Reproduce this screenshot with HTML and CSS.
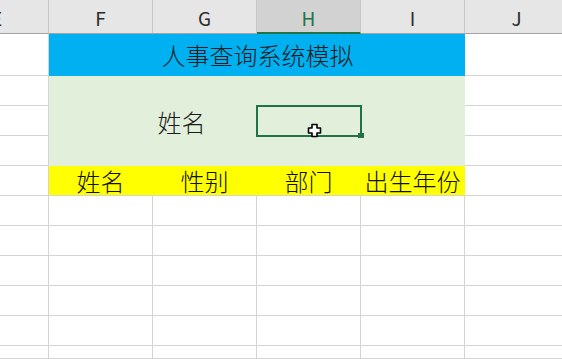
FILE: index.html
```html
<!DOCTYPE html>
<html lang="zh-CN">
<head>
    <meta charset="UTF-8">
    <title>人事查询系统模拟</title>
    <link rel="stylesheet" href="styles.css">
</head>
<body>
    <div class="sheet">
        <!-- column headers -->
        <div class="col-head">E</div>
        <div class="col-head">F</div>
        <div class="col-head">G</div>
        <div class="col-head active">H</div>
        <div class="col-head">I</div>
        <div class="col-head">J</div>

        <!-- row 1 -->
        <div class="cell"></div>
        <div class="cell title">人事查询系统模拟</div>
        <div class="cell"></div>

        <!-- rows 2-4 -->
        <div class="cell"></div>
        <div class="cell query">
            <div class="query-label">姓名</div>
            <div class="sel">
                <span class="handle"></span>
                <svg class="cursor" width="15" height="15" viewBox="0 0 15 15">
                    <path d="M5 1.5h5v3.5h3.5v5h-3.5v3.5h-5v-3.5h-3.5v-5h3.5z" fill="#fff" stroke="#000" stroke-width="1.6" stroke-linejoin="round"/>
                </svg>
            </div>
        </div>
        <div class="cell"></div>
        <div class="cell"></div>
        <div class="cell"></div>
        <div class="cell"></div>
        <div class="cell"></div>

        <!-- row 5 -->
        <div class="cell"></div>
        <div class="cell yellow">姓名</div>
        <div class="cell yellow">性别</div>
        <div class="cell yellow">部门</div>
        <div class="cell yellow">出生年份</div>
        <div class="cell"></div>

        <!-- empty rows -->
        <div class="cell"></div><div class="cell"></div><div class="cell"></div><div class="cell"></div><div class="cell"></div><div class="cell"></div>
        <div class="cell"></div><div class="cell"></div><div class="cell"></div><div class="cell"></div><div class="cell"></div><div class="cell"></div>
        <div class="cell"></div><div class="cell"></div><div class="cell"></div><div class="cell"></div><div class="cell"></div><div class="cell"></div>
        <div class="cell"></div><div class="cell"></div><div class="cell"></div><div class="cell"></div><div class="cell"></div><div class="cell"></div>
        <div class="cell"></div><div class="cell"></div><div class="cell"></div><div class="cell"></div><div class="cell"></div><div class="cell"></div>
        <div class="cell"></div><div class="cell"></div><div class="cell"></div><div class="cell"></div><div class="cell"></div><div class="cell"></div>
    </div>
</body>
</html>
```

FILE: styles.css
```css
html, body {
    margin: 0;
    padding: 0;
    background-color: #fff;
    overflow: hidden;
}

body {
    width: 562px;
    height: 359px;
    font-family: "Noto Sans CJK SC", "Noto Sans", sans-serif;
    font-weight: 300;
    color: #1b1b1b;
}

.sheet {
    display: grid;
    grid-template-columns: repeat(6, 104px);
    grid-template-rows: 34px 42px repeat(9, 30px) 13px;
    margin-left: -55px;
    width: 624px;
}

.col-head {
    box-sizing: border-box;
    background-color: #e6e6e6;
    border-right: 1px solid #c6c6c6;
    border-bottom: 1px solid #a3a3a3;
    display: flex;
    align-items: flex-end;
    justify-content: center;
    padding-bottom: 3px;
    font-size: 19px;
    font-weight: 400;
    line-height: 24px;
    color: #2b2b2b;
}

.col-head.active {
    background-color: #d2d2d2;
    border-bottom: 2px solid #217346;
    padding-bottom: 2px;
    color: #217346;
}

.cell {
    box-sizing: border-box;
    border-right: 1px solid #d4d4d4;
    border-bottom: 1px solid #d4d4d4;
    display: flex;
    align-items: center;
    justify-content: center;
    font-size: 24px;
    line-height: 28px;
}

.title {
    grid-column: span 4;
    background-color: #00b0f0;
    border-color: transparent;
    padding-left: 2px;
}

.query {
    grid-column: span 4;
    grid-row: span 3;
    background-color: #e2efda;
    border-color: transparent;
    display: grid;
    grid-template-columns: repeat(4, 104px);
    grid-template-rows: repeat(3, 30px);
    align-items: stretch;
}

.query-label {
    grid-column: 2;
    grid-row: 1 / span 3;
    display: flex;
    align-items: center;
    padding-left: 5px;
    padding-top: 1px;
}

.sel {
    grid-column: 3;
    grid-row: 2;
    margin: -1px;
    border: 2px solid #217346;
    position: relative;
}

.handle {
    position: absolute;
    right: -4px;
    bottom: -3px;
    width: 6px;
    height: 5px;
    background-color: #217346;
}

.cursor {
    position: absolute;
    left: 49px;
    top: 16px;
}

.yellow {
    background-color: #ffff00;
    border-right-color: transparent;
    color: #111;
}
```
